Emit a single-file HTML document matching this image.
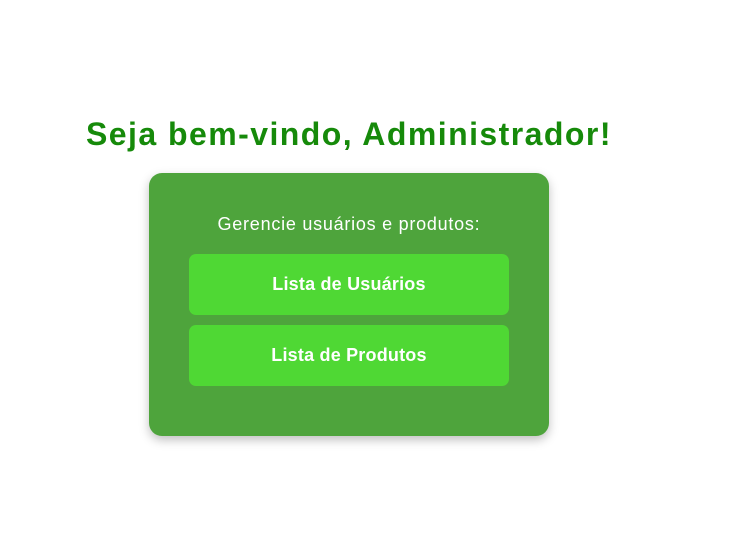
<!DOCTYPE html>
<html><head><meta charset="utf-8"><style>
body{margin:0;width:751px;height:534px;background:#fff;font-family:"Liberation Sans",sans-serif;position:relative;overflow:hidden}
h1{position:absolute;left:86px;top:112px;margin:0;font-size:32px;line-height:44px;font-weight:bold;color:#168a0a;letter-spacing:1.45px;white-space:nowrap}
.card{position:absolute;left:149px;top:173px;width:400px;height:263px;background:#4ea43c;border-radius:13px;box-shadow:0 4px 10px rgba(0,0,0,0.25)}
.sub{position:absolute;left:0;width:400px;top:40px;text-align:center;color:#fff;font-size:18px;line-height:22px;letter-spacing:0.75px}
.btn{position:absolute;left:40px;width:320px;height:61px;background:#4fd834;border-radius:7px;color:#fff;font-weight:bold;font-size:18px;line-height:61px;text-align:center;letter-spacing:0.2px}
</style></head><body>
<h1>Seja bem-vindo, Administrador!</h1>
<div class="card">
<div class="sub">Gerencie usuários e produtos:</div>
<div class="btn" style="top:81px">Lista de Usuários</div>
<div class="btn" style="top:152px">Lista de Produtos</div>
</div>
</body></html>
